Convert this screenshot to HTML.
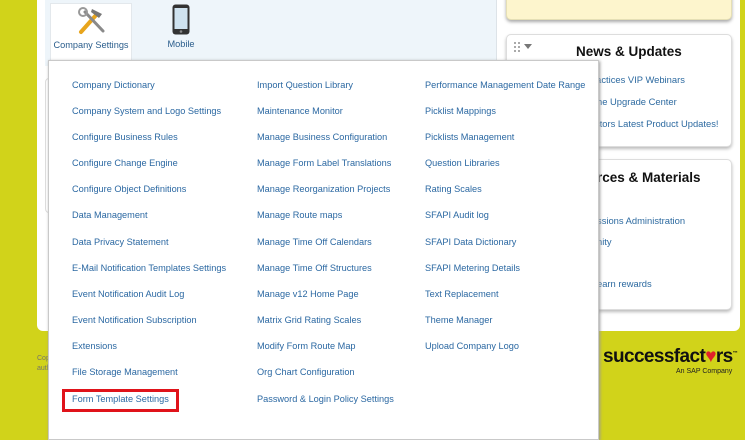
<!DOCTYPE html>
<html><head><style>
*{margin:0;padding:0;box-sizing:border-box}
body{width:745px;height:417px;overflow:hidden;background:#d1d31a;font-family:"Liberation Sans",Arial,sans-serif;position:relative}
.a{position:absolute}
.main{left:37px;top:-10px;width:703px;height:341px;background:#fff;border-radius:6px}
.leftp{left:45px;top:0;width:452px;height:66px;background:#eef5fa;border-right:1px solid #dde3e8}
.card2{left:45px;top:78px;width:20px;height:135px;border:1px solid #ddd;border-radius:4px;background:#fff}
.tile{left:50px;top:3px;width:82px;height:60px;background:#fff;border:1px solid #e3e8ec;border-bottom:none}
.lbl{font-size:9.2px;color:#2a5d8c;text-align:center;white-space:nowrap}
.yc{left:506px;top:-10px;width:226px;height:30px;background:#fdf5cd;border:1px solid #e5dfb5;border-radius:5px;box-shadow:0 2px 3px #aaa}
.nc{left:506px;top:34px;width:226px;height:113px;background:#fff;border:1px solid #ddd;border-radius:5px;box-shadow:0 2px 3px #bbb}
.rc{left:506px;top:159px;width:226px;height:151px;background:#fff;border:1px solid #ddd;border-radius:5px;box-shadow:0 2px 3px #bbb}
h2{position:absolute;font-size:13.5px;font-weight:bold;color:#111;white-space:nowrap}
.lk{position:absolute;font-size:9.4px;color:#2d6aa0;white-space:nowrap}
.dd{left:48px;top:60px;width:551px;height:380px;background:#fff;border:1px solid #c9c9c9;box-shadow:1px 1px 3px #999}
.m{position:absolute;font-size:9.2px;color:#2b68a2;white-space:nowrap}
.red{left:62px;top:389px;width:117px;height:23px;border:3px solid #e0131a}
</style></head><body>
<div class="a main"></div>
<div class="a leftp"></div>
<div class="a card2"></div>
<div class="a tile">
 <svg class="a" style="left:26px;top:2px" width="30" height="30" viewBox="0 0 30 30"><path d="M4 26 L20 8" stroke="#e8a51c" stroke-width="4" stroke-linecap="round"/><path d="M8 6 L26 25" stroke="#8a8a8a" stroke-width="3" stroke-linecap="round"/><path d="M15 3 L25 8 L22 12 L14 6Z" fill="#777"/><circle cx="6" cy="6" r="4" fill="none" stroke="#999" stroke-width="2"/></svg>
 <div class="a lbl" style="left:0;top:36px;width:80px">Company Settings</div>
</div>
<svg class="a" style="left:172px;top:4px" width="18" height="31" viewBox="0 0 18 31"><rect x="0.5" y="0.5" width="17" height="30" rx="3" fill="#333"/><rect x="2.5" y="4" width="13" height="21" fill="#cfe3f0"/><circle cx="9" cy="27.5" r="1.3" fill="#888"/></svg>
<div class="a lbl" style="left:160px;top:39px;width:42px">Mobile</div>
<div class="a yc"></div>
<div class="a nc">
 <svg class="a" style="left:7px;top:7px" width="26" height="10"><g fill="#aaa"><rect x="0" y="0" width="2" height="2"/><rect x="4" y="0" width="2" height="2"/><rect x="0" y="4" width="2" height="2"/><rect x="4" y="4" width="2" height="2"/><rect x="0" y="8" width="2" height="2"/><rect x="4" y="8" width="2" height="2"/></g><path d="M10 2 L18 2 L14 7Z" fill="#777"/></svg>
 <h2 style="left:69px;top:9px">News &amp; Updates</h2>
 <div class="lk" style="left:86px;top:39px">ractices VIP Webinars</div>
 <div class="lk" style="left:90px;top:61px">he Upgrade Center</div>
 <div class="lk" style="left:88px;top:83px">ctors Latest Product Updates!</div>
</div>
<div class="a rc">
 <h2 style="left:90px;top:10px">rces &amp; Materials</h2>
 <div class="lk" style="left:90px;top:55px">ssions Administration</div>
 <div class="lk" style="left:90px;top:76px">nity</div>
 <div class="lk" style="left:90px;top:118px">earn rewards</div>
</div>
<div class="a" style="left:37px;top:354px;font-size:7px;color:#776;line-height:10px">Cop<br>auth</div>
<div class="a" style="left:603px;top:346px;font-size:19px;font-weight:bold;color:#111;letter-spacing:-0.6px;white-space:nowrap">successfact<span style="color:#e0202a">♥</span>rs<sup style="font-size:5px">™</sup></div>
<div class="a" style="left:676px;top:368px;font-size:7px;color:#222;white-space:nowrap">An SAP Company</div>
<div class="a dd">
<div class="m" style="left:23px;top:19px">Company Dictionary</div>
<div class="m" style="left:23px;top:45px">Company System and Logo Settings</div>
<div class="m" style="left:23px;top:71px">Configure Business Rules</div>
<div class="m" style="left:23px;top:97px">Configure Change Engine</div>
<div class="m" style="left:23px;top:123px">Configure Object Definitions</div>
<div class="m" style="left:23px;top:149px">Data Management</div>
<div class="m" style="left:23px;top:176px">Data Privacy Statement</div>
<div class="m" style="left:23px;top:202px">E-Mail Notification Templates Settings</div>
<div class="m" style="left:23px;top:228px">Event Notification Audit Log</div>
<div class="m" style="left:23px;top:254px">Event Notification Subscription</div>
<div class="m" style="left:23px;top:280px">Extensions</div>
<div class="m" style="left:23px;top:306px">File Storage Management</div>
<div class="m" style="left:23px;top:333px">Form Template Settings</div>
<div class="m" style="left:208px;top:19px">Import Question Library</div>
<div class="m" style="left:208px;top:45px">Maintenance Monitor</div>
<div class="m" style="left:208px;top:71px">Manage Business Configuration</div>
<div class="m" style="left:208px;top:97px">Manage Form Label Translations</div>
<div class="m" style="left:208px;top:123px">Manage Reorganization Projects</div>
<div class="m" style="left:208px;top:149px">Manage Route maps</div>
<div class="m" style="left:208px;top:176px">Manage Time Off Calendars</div>
<div class="m" style="left:208px;top:202px">Manage Time Off Structures</div>
<div class="m" style="left:208px;top:228px">Manage v12 Home Page</div>
<div class="m" style="left:208px;top:254px">Matrix Grid Rating Scales</div>
<div class="m" style="left:208px;top:280px">Modify Form Route Map</div>
<div class="m" style="left:208px;top:306px">Org Chart Configuration</div>
<div class="m" style="left:208px;top:333px">Password &amp; Login Policy Settings</div>
<div class="m" style="left:376px;top:19px">Performance Management Date Range</div>
<div class="m" style="left:376px;top:45px">Picklist Mappings</div>
<div class="m" style="left:376px;top:71px">Picklists Management</div>
<div class="m" style="left:376px;top:97px">Question Libraries</div>
<div class="m" style="left:376px;top:123px">Rating Scales</div>
<div class="m" style="left:376px;top:149px">SFAPI Audit log</div>
<div class="m" style="left:376px;top:176px">SFAPI Data Dictionary</div>
<div class="m" style="left:376px;top:202px">SFAPI Metering Details</div>
<div class="m" style="left:376px;top:228px">Text Replacement</div>
<div class="m" style="left:376px;top:254px">Theme Manager</div>
<div class="m" style="left:376px;top:280px">Upload Company Logo</div>
</div>
<div class="a red"></div>
</body></html>
